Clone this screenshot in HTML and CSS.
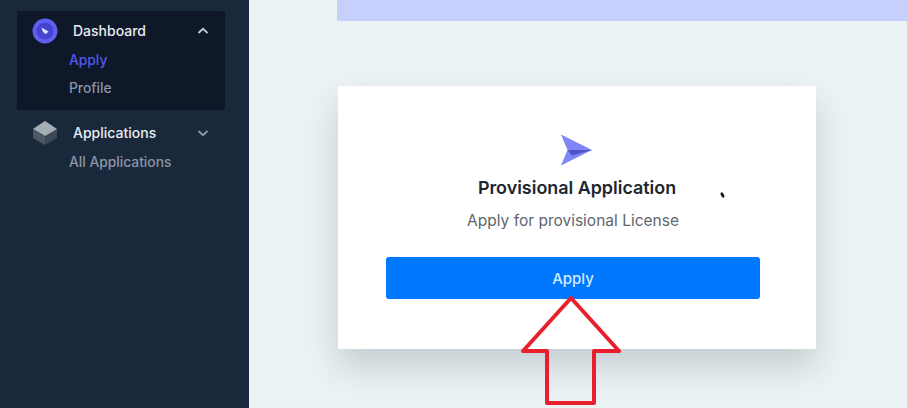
FILE: index.html
```html
<!DOCTYPE html>
<html lang="en">
<head>
<meta charset="utf-8">
<title>Provisional Application</title>
<link rel="stylesheet" href="styles.css">
</head>
<body>
<div class="app">
  <aside class="sidebar">
    <section class="group group-active">
      <div class="group-head">
        <svg class="group-icon" viewBox="0 0 26 26" aria-hidden="true">
          <circle cx="13" cy="13" r="12.5" fill="#5f60f2"/>
          <circle cx="13" cy="13" r="8.5" fill="#4543cf"/>
          <path d="M9.5 9.5 L16.5 13.5 L14 16 Q10.5 15 9.5 9.5 Z" fill="#dfe2fb"/>
        </svg>
        <span class="group-title">Dashboard</span>
        <svg class="chevron" viewBox="0 0 12 8" aria-hidden="true"><path d="M1.5 6 L6 1.8 L10.5 6"/></svg>
      </div>
      <a class="sub sub-current">Apply</a>
      <a class="sub">Profile</a>
    </section>
    <section class="group group-plain">
      <div class="group-head">
        <svg class="group-icon" viewBox="0 0 26 26" aria-hidden="true">
          <path d="M13 1 L25 9 L25 18 L13 25 L1 18 L1 9 Z" fill="#3c4856"/>
          <path d="M13 1 L25 9 L13 16 L1 9 Z" fill="#a5adb6"/>
          <path d="M1 9 L13 16 L13 25 L1 18 Z" fill="#4d5865"/>
        </svg>
        <span class="group-title">Applications</span>
        <svg class="chevron chevron-dim" viewBox="0 0 12 8" aria-hidden="true"><path d="M1.5 2 L6 6.2 L10.5 2"/></svg>
      </div>
      <a class="sub">All Applications</a>
    </section>
  </aside>
  <main class="main">
    <div class="banner"></div>
    <div class="card">
      <svg class="plane" viewBox="0 0 32 32" aria-hidden="true">
        <path d="M1 0.5 L32 16 L1 31.5 L7.5 16 Z" fill="#7f86f5"/>
        <path d="M7.5 16 L32 16 L12 21.5 Z" fill="#4f53cc"/>
      </svg>
      <h1 class="card-title">Provisional Application</h1>
      <p class="card-text">Apply for provisional License</p>
      <button class="apply" type="button">Apply</button>
    </div>
  </main>
</div>
<svg class="arrow" viewBox="0 0 102 110" aria-hidden="true">
  <path d="M50 2 L98 55 L73 55 L73 107 L26 107 L26 55 L2 55 Z"/>
</svg>
<span class="speck"></span>
</body>
</html>
```

FILE: styles.css
```css
* { box-sizing: border-box; }
html, body { margin: 0; height: 100%; overflow: hidden; }
body {
  position: relative;
  width: 907px;
  height: 408px;
  background: #ecf3f5;
  font-family: Inter, "Liberation Sans", sans-serif;
}
.app { display: flex; height: 408px; }
.sidebar {
  width: 249px;
  flex: none;
  padding: 11px 24px 0 17px;
  background: #1a283c;
}
.group-active {
  height: 99px;
  margin-bottom: 4px;
  background: #0e1829;
  border-radius: 2px;
}
.group-head {
  display: flex;
  align-items: center;
  height: 40px;
  padding-left: 15px;
  color: #e8ebef;
}
.group-plain .group-head { height: 38px; }
.group-icon { width: 26px; height: 26px; flex: none; }
.group-title {
  margin-left: 15px;
  width: 115px;
  font-size: 14px;
  font-weight: 500;
  line-height: 20px;
}
.chevron {
  width: 12px;
  height: 8px;
  margin-left: 9px;
  fill: none;
  stroke: #c3c9d1;
  stroke-width: 1.8;
}
.chevron-dim { stroke: #8f99a6; }
.sub {
  display: block;
  height: 28px;
  padding-left: 52px;
  font-size: 13.8px;
  font-weight: 500;
  line-height: 19px;
  color: #8b95a3;
}
.group-plain .sub { height: 20px; line-height: 20px; }
.sub-current { color: #5457ec; }
.main {
  flex: 1;
  padding-left: 88px;
}
.banner {
  height: 21px;
  background: #c7d0fd;
}
.card {
  display: flex;
  flex-direction: column;
  align-items: center;
  width: 478px;
  height: 263px;
  margin: 65px 0 0 1px;
  padding: 48px 8px 0 0;
  background: #fff;
  box-shadow: 0 18px 32px rgba(120, 132, 138, 0.34);
}
.plane { width: 32px; height: 32px; flex: none; margin-left: 6px; }
.card-title {
  margin: 10px 0 0 8px;
  font-size: 17.9px;
  font-weight: 600;
  line-height: 24px;
  color: #20262f;
}
.card-text {
  margin: 9px 0 0;
  font-size: 15.5px;
  font-weight: 400;
  line-height: 24px;
  color: #5f666e;
}
.apply {
  width: 374px;
  height: 42px;
  margin-top: 24px;
  border: 0;
  border-radius: 3px;
  background: #0077ff;
  color: #d3e9ff;
  font: 500 15px Inter, "Liberation Sans", sans-serif;
}
.arrow {
  position: absolute;
  left: 521px;
  top: 296px;
  width: 102px;
  height: 110px;
  fill: none;
  stroke: #e8202e;
  stroke-width: 4;
  stroke-linejoin: round;
}
.speck {
  position: absolute;
  left: 721px;
  top: 192px;
  width: 3px;
  height: 6px;
  border-radius: 50%;
  background: #14161a;
  transform: rotate(-30deg);
}
```
